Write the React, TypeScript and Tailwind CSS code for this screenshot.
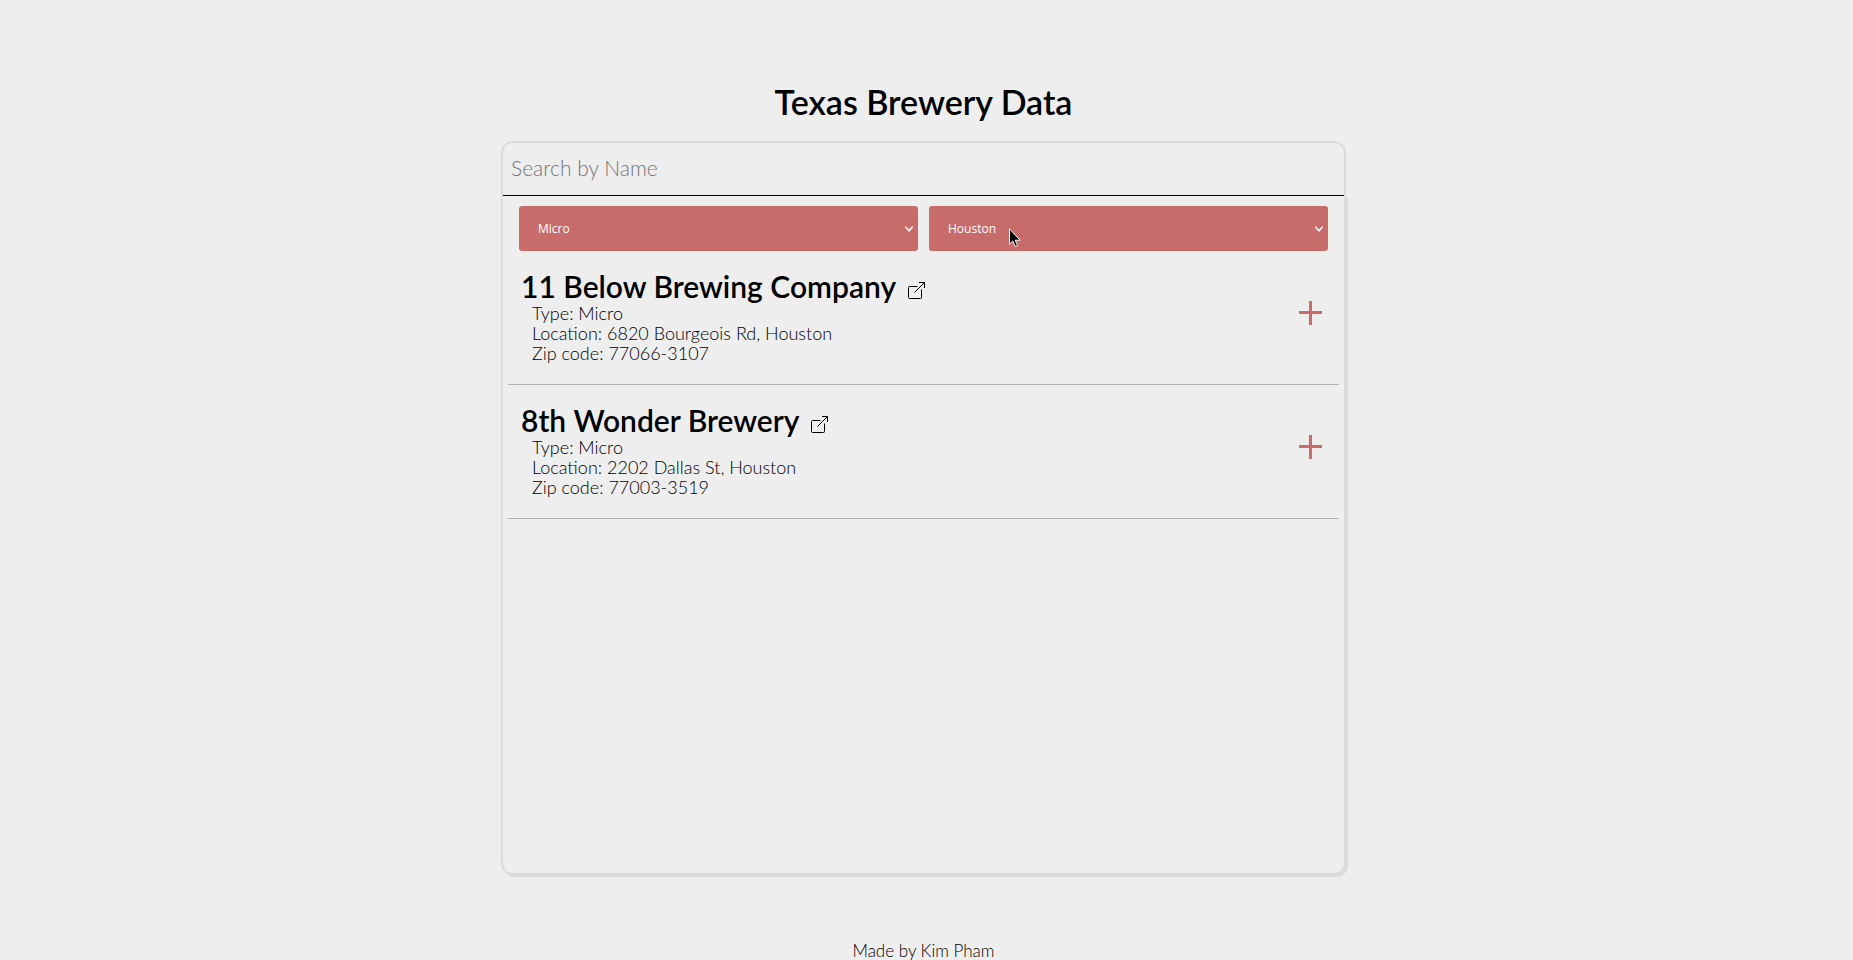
import { useState } from "react";

type Brewery = {
  name: string;
  type: string;
  street: string;
  city: string;
  zip: string;
};

const breweries: Brewery[] = [
  { name: "11 Below Brewing Company", type: "Micro", street: "6820 Bourgeois Rd", city: "Houston", zip: "77066-3107" },
  { name: "8th Wonder Brewery", type: "Micro", street: "2202 Dallas St", city: "Houston", zip: "77003-3519" },
];

function ExternalLinkIcon() {
  return (
    <svg viewBox="0 0 17 17" className="size-[17px]" fill="none" stroke="currentColor" strokeWidth="1" aria-hidden="true">
      <path d="M9.5 4.5H1.5a1 1 0 0 0-1 1v10a1 1 0 0 0 1 1h11a1 1 0 0 0 1-1V7.5M6.5 10.5L16.3.7M11 .5h5.5V6" />
    </svg>
  );
}

function PlusIcon() {
  return (
    <svg viewBox="0 0 24 26" className="h-[26px] w-6" fill="currentColor" aria-hidden="true">
      <path d="M10 1h3v10h10v3H13v11h-3V14H0v-3h10z" />
    </svg>
  );
}

function Pointer() {
  return (
    <svg viewBox="0 0 12 20" className="pointer-events-none absolute top-[22px] left-20 h-5 w-3" aria-hidden="true">
      <path d="M.5.8v15.4l3.3-3.2 2.5 5.5 2.3-1-2.4-5.3h4.9z" fill="#000" stroke="#fff" strokeWidth="1" />
    </svg>
  );
}

function Filter({ label, options, hovered }: { label: string; options: string[]; hovered?: boolean }) {
  return (
    <div className="relative flex-1">
      <select
        aria-label={label}
        className="block h-[45px] w-full appearance-none rounded-[3px] bg-[#c76b6b] pr-6 pl-[19px] font-['Open_Sans',sans-serif] text-xs text-white outline-none"
      >
        {options.map((option) => (
          <option key={option}>{option}</option>
        ))}
      </select>
      <svg
        viewBox="0 0 8 6"
        className="pointer-events-none absolute top-5 right-[5px] h-1.5 w-2"
        fill="none"
        stroke="#fff"
        strokeWidth="1.5"
        aria-hidden="true"
      >
        <path d="M.3 .8L4 4.8 7.7 .8" />
      </svg>
      {hovered && <Pointer />}
    </div>
  );
}

function BreweryRow({ brewery }: { brewery: Brewery }) {
  return (
    <li className="flex items-start justify-between border-b border-[#b3b3b3] pr-4 pb-[21px] pl-[13px] pt-5">
      <div>
        <div className="mb-0.5 flex items-center gap-3">
          <h2 className="text-[30px] leading-[30px] font-semibold">{brewery.name}</h2>
          <a href="#website" aria-label={`${brewery.name} website`} className="pt-2">
            <ExternalLinkIcon />
          </a>
        </div>
        <div className="pl-[11px] text-lg leading-5 font-light">
          <p>Type: {brewery.type}</p>
          <p>
            Location: {brewery.street}, {brewery.city}
          </p>
          <p>Zip code: {brewery.zip}</p>
        </div>
      </div>
      <button type="button" aria-label={`Show more about ${brewery.name}`} className="pt-[29px] text-[#c76b6b]">
        <PlusIcon />
      </button>
    </li>
  );
}

export default function App() {
  const [query, setQuery] = useState("");
  const shown = breweries.filter((b) => b.name.toLowerCase().includes(query.toLowerCase()));

  return (
    <div className="flex min-h-screen flex-col items-center bg-[#eeeeee] pt-20 pr-1.5 font-['Lato',sans-serif] text-black">
      <h1 className="text-[34px] leading-11 font-semibold">Texas Brewery Data</h1>
      <main className="mt-[17px] w-full max-w-[845px]">
        <div className="rounded-t-xl border-2 border-b-0 border-[#dbdbdb]">
          <input
            type="text"
            aria-label="Search by Name"
            placeholder="Search by Name"
            value={query}
            onChange={(event) => setQuery(event.target.value)}
            className="block h-[53px] w-full border-b border-black bg-transparent px-2 pb-1 text-[21px] font-light outline-none placeholder:text-[#757575]"
          />
        </div>
        <div className="min-h-[679px] rounded-b-xl border-2 border-t-0 border-[#dbdbdb] px-[5px] shadow-[2px_2px_0_#dbdbdb]">
          <div className="flex gap-[11px] px-[11px] pt-2.5">
            <Filter label="Brewery type" options={["Micro", "Nano", "Regional", "Brewpub"]} />
            <Filter label="City" options={["Houston", "Austin", "Dallas", "San Antonio"]} hovered />
          </div>
          <ul>
            {shown.map((brewery) => (
              <BreweryRow key={brewery.name} brewery={brewery} />
            ))}
          </ul>
        </div>
      </main>
      <footer className="mt-auto text-[17px] leading-[18px] font-light">Made by Kim Pham</footer>
    </div>
  );
}
